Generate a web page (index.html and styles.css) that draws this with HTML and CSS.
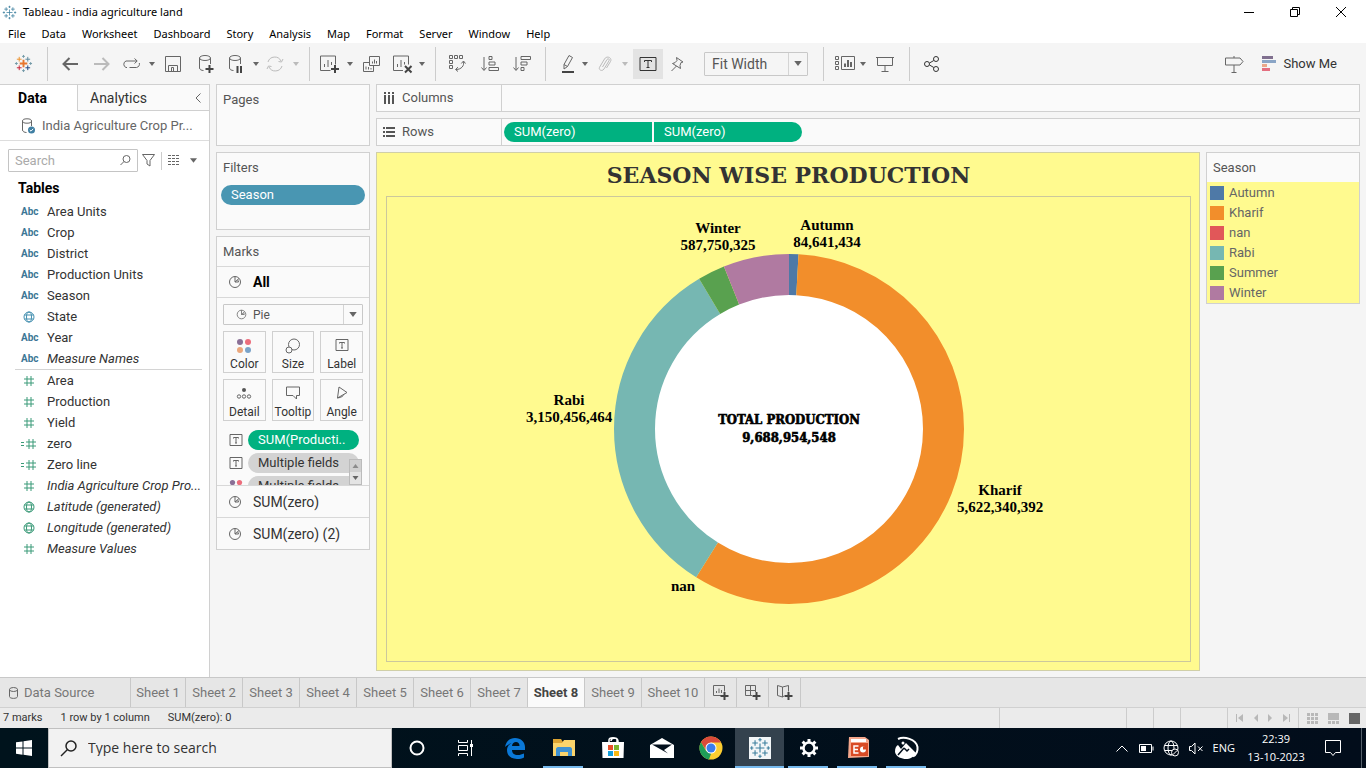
FILE: index.html
```html
<!DOCTYPE html>
<html lang="en">
<head>
<meta charset="utf-8">
<title>Tableau - india agriculture land</title>
<link rel="stylesheet" href="styles.css">
</head>
<body>
<svg class="sprite" aria-hidden="true">
  <symbol id="caret" viewBox="0 0 6 4"><path d="M0 0h6L3 4z" fill="currentColor"/></symbol>
  <symbol id="crosses" viewBox="0 0 20 20">
    <path class="c1" d="M10 6v8M6 10h8"/>
    <path class="c2" d="M5.5 3v5M3 5.5h5"/><path class="c3" d="M14.5 3v5M12 5.5h5"/>
    <path class="c4" d="M5.5 12v5M3 14.5h5"/><path class="c5" d="M14.5 12v5M12 14.5h5"/>
    <path class="c6" d="M10 1v3M8.500 2.500h3M10 16v3M8.500 17.500h3M2.500 8.500v3M1 10h3M17.500 8.500v3M16 10h3"/>
  </symbol>
  <symbol id="pie" viewBox="0 0 14 14"><circle cx="7" cy="7" r="5.500"/><path d="M7 7V1.500M7 7l4-3.500M7 7h3.500a3.500 3.500 0 0 0-1-2.200"/></symbol>
  <symbol id="label" viewBox="0 0 14 14"><path d="M1 1.500h12v11H1zM4.500 5.500V4.500h5v1M7 4.500V10M6 10h2"/></symbol>
  <symbol id="hash" viewBox="0 0 12 12"><path d="M4 1v10M8 1v10M1 4h10M1 8h10"/></symbol>
  <symbol id="calc" viewBox="0 0 16 12"><path d="M8 1v10M12 1v10M5 4h10M5 8h10M0 4.500h3M0 7.500h3"/></symbol>
  <symbol id="globe" viewBox="0 0 12 12"><circle cx="6" cy="6" r="5"/><ellipse cx="6" cy="6" rx="2.500" ry="5"/><path d="M1.500 4h9M1.500 8h9"/></symbol>
  <symbol id="dots" viewBox="0 0 16 16"><g stroke="none"><circle cx="4" cy="4" r="3" fill="#8a6f96"/><circle cx="12" cy="4" r="3" fill="#ec6d7c"/><circle cx="4" cy="12" r="3" fill="#eba77c"/><circle cx="12" cy="12" r="3" fill="#7ba3c8"/></g></symbol>
</svg>

<header class="titlebar">
  <svg class="app-icon mono" width="15" height="15"><use href="#crosses"/></svg>
  <h1 class="app-title">Tableau - india agriculture land</h1>
  <div class="window-buttons">
    <button aria-label="Minimize"><svg width="10" height="10"><path d="M0 5.500h10"/></svg></button>
    <button aria-label="Restore"><svg width="10" height="10"><path d="M.5 2.500h7v7h-7zM2.500 2.500v-2h7v7h-2"/></svg></button>
    <button aria-label="Close"><svg width="10" height="10"><path d="M0 0l10 10M10 0L0 10"/></svg></button>
  </div>
</header>

<nav class="menubar">
  <a href="#">File</a><a href="#">Data</a><a href="#">Worksheet</a><a href="#">Dashboard</a><a href="#">Story</a><a href="#">Analysis</a><a href="#">Map</a><a href="#">Format</a><a href="#">Server</a><a href="#">Window</a><a href="#">Help</a>
</nav>

<div class="toolbar">
  <div class="group g-logo"><button aria-label="Start page"><svg class="color-logo" width="19" height="19"><use href="#crosses"/></svg></button></div>
  <div class="group g-history">
    <button aria-label="Undo"><svg width="16" height="14"><path class="thick" d="M16 7H1.500M7.500 1l-6 6 6 6"/></svg></button>
    <button aria-label="Redo" class="off"><svg width="16" height="14"><path class="thick" d="M0 7h14.500M8.500 1l6 6-6 6"/></svg></button>
    <button aria-label="Replay"><svg width="18" height="12"><path d="M5 9.500H4A3.500 3.500 0 0 1 4 3h11M12.500.500L15.200 3l-2.700 2.500M7.500 9.500h7A3.500 3.500 0 0 0 17.300 5"/></svg></button>
    <button aria-label="Replay options"><svg class="caret" width="6" height="4"><use href="#caret"/></svg></button>
    <button aria-label="Save"><svg width="16" height="16"><path d="M.5.500h15v15H.500zM3.500 15.500v-6h9v6M6.500 15v-3.500h2V15"/></svg></button>
    <button aria-label="New data source"><svg width="16" height="18"><ellipse cx="7" cy="3" rx="5.500" ry="2.500"/><path d="M1.500 3v10c0 1.500 2 2.500 4 2.500M12.500 3v6"/><path class="heavy" d="M11.500 10v8M7.500 14h8"/></svg></button>
    <button aria-label="Pause auto updates"><svg width="16" height="18"><ellipse cx="7" cy="3" rx="5.500" ry="2.500"/><path d="M1.500 3v10c0 1.500 2 2.500 4 2.500M12.500 3v6"/><path class="heavy" d="M9.500 11v7M13 11v7"/></svg></button>
    <button aria-label="Pause options"><svg class="caret" width="6" height="4"><use href="#caret"/></svg></button>
    <button aria-label="Run update" class="off"><svg width="18" height="16"><path d="M2 6A7 7 0 0 1 15 5M16 10A7 7 0 0 1 3 11M12.500 5.500L15.500 6l1.500-3M5.500 10.500L2.500 10 1 13"/></svg></button>
    <button aria-label="Run options" class="off"><svg class="caret" width="6" height="4"><use href="#caret"/></svg></button>
  </div>
  <div class="group g-sheet">
    <button aria-label="New worksheet"><svg width="18" height="18"><path d="M10.500 15.500H.500V1h15v8.500M4.500 12V9M8 12V5M11.500 10V7"/><path class="heavy" d="M15 10v8M11 14h8"/></svg></button>
    <button aria-label="New worksheet options"><svg class="caret" width="6" height="4"><use href="#caret"/></svg></button>
    <button aria-label="Duplicate"><svg width="17" height="16"><path d="M6.500.500h10v9h-10zM6 6.500H.500v9h10V10M9.500 7.500v-2M11.500 7.500v-4M13.500 7.500V5M3 13.500v-3M5.500 13.500V11M8 13.500V12"/></svg></button>
    <button aria-label="Clear sheet"><svg width="18" height="18"><path d="M10 15.500H.500V1h15v8.500M4.500 12V9M8 12V5M11.500 9.500V7"/><path class="heavy" d="M12 11l6.500 6.500M18.500 11L12 17.500"/></svg></button>
    <button aria-label="Clear options"><svg class="caret" width="6" height="4"><use href="#caret"/></svg></button>
  </div>
  <div class="group g-sort">
    <button aria-label="Swap rows and columns"><svg width="17" height="17"><path d="M.5.500h3v3h-3zM5.500.500h3v3h-3zM10.500.500h3v3h-3zM.5 5.500h3v3h-3zM.5 10.500h3v3h-3zM14.500 6.500c1 4-2 8-7.500 8M12.300 8.500l2.200-2.500 2 2.500M9 12.200l-2.500 2.300L9 16.500"/></svg></button>
    <button aria-label="Sort ascending"><svg width="18" height="16"><path d="M3 1v13M.5 11.500L3 14.500l2.500-3M8 .500h3v3H8zM8 6h6v3H8zM8 11.500h9.500v3H8z"/></svg></button>
    <button aria-label="Sort descending"><svg width="18" height="16"><path d="M3 1v13M.5 11.500L3 14.500l2.500-3M8 .500h9.500v3H8zM8 6h6v3H8zM8 11.500h3v3H8z"/></svg></button>
  </div>
  <div class="group g-format">
    <button aria-label="Highlight"><svg width="14" height="18"><path d="M3 9.500l5-9 3.500 2-5 9-3.500 2.500zM3 9.500l3.500 2"/><path class="heavy" d="M1 17h12"/></svg></button>
    <button aria-label="Highlight options"><svg class="caret" width="6" height="4"><use href="#caret"/></svg></button>
    <button aria-label="Group members" class="off"><svg width="14" height="16"><path d="M4.500 11l4.500-7.500c1-1.500 3-.5 2 1.300L6 13c-2 3-6 .7-4.300-2L6.500 3C9-1 14.500 2 12.500 5.500L8.500 12"/></svg></button>
    <button aria-label="Group options" class="off"><svg class="caret" width="6" height="4"><use href="#caret"/></svg></button>
    <button aria-label="Show mark labels" class="pressed"><svg width="18" height="16"><path d="M1 1.500h16v13H1zM5.500 6V4.500h7V6M9 4.500v7M7.500 11.500h3"/></svg></button>
    <button aria-label="Fix axes"><svg width="13" height="14"><path d="M5.500.500l6.500 4.500-2 .5-1 3 .5 3L1.500 6.500l2.500-.8L6 3.500zM5.500 9L.5 14"/></svg></button>
    <div class="select fit"><select aria-label="Fit"><option>Fit Width</option></select><svg class="caret" width="7" height="5"><use href="#caret"/></svg></div>
  </div>
  <div class="group g-cards">
    <button aria-label="Show or hide cards"><svg width="20" height="15"><path d="M.5.500h3v3h-3zM.5 5.500h3v3h-3zM.5 10.500h3v3h-3zM6.500.500h13v13h-13z"/><path class="thick" d="M10 11V7.500M13 11V4M16 11V6"/></svg></button>
    <button aria-label="Card options"><svg class="caret" width="6" height="4"><use href="#caret"/></svg></button>
    <button aria-label="Presentation mode"><svg width="18" height="16"><path d="M0 1.500h18M1.500 1.500v8h15v-8M9 9.500v6M5.500 15.500h7"/></svg></button>
  </div>
  <div class="group g-share"><button aria-label="Share"><svg class="dark" width="16" height="16"><circle cx="3" cy="8" r="2.500"/><circle cx="12" cy="3" r="2.500"/><circle cx="12" cy="13" r="2.500"/><path d="M5.500 7L9.800 4.500M5.500 9l4.300 2.500"/></svg></button></div>
  <div class="toolbar-end">
    <button aria-label="Guide me"><svg width="19" height="18"><path d="M.5 3h14.500l3 3.500-3 3.500H.500zM9 1v2M9 10v7.500M6.500 17.500h5"/></svg></button>
    <button class="show-me"><svg width="14" height="16"><path d="M0 1.500h11" stroke="#80708f"/><path d="M0 5.500h14" stroke="#8aa5c6"/><path d="M0 9.500h5" stroke="#eaa88a"/><path d="M0 13.500h8" stroke="#e46f80"/></svg>Show Me</button>
  </div>
</div>

<main class="workspace">
  <aside class="data-pane">
    <div class="pane-tabs">
      <button class="tab-data">Data</button>
      <button class="tab-analytics">Analytics<svg width="6" height="10"><path d="M5.500 .500L1 5l4.500 4.500"/></svg></button>
    </div>
    <button class="source"><svg width="15" height="16"><ellipse cx="6" cy="3" rx="4.500" ry="2.200"/><path d="M1.500 3v9c0 1.500 2 2.500 4 2.500M10.500 3v5"/><circle cx="10.500" cy="12" r="3.500" fill="#3f7fa3" stroke="none"/><path d="M8.800 12l1.200 1.200 2.200-2.400" stroke="#fff"/></svg>India Agriculture Crop Pr...</button>
    <div class="search-row">
      <div class="search"><input type="text" placeholder="Search" aria-label="Search fields"><svg width="11" height="11"><circle cx="6.500" cy="4" r="3.500"/><path d="M4 6.500L.5 10"/></svg></div>
      <button aria-label="Filter fields"><svg width="13" height="13"><path d="M.5.500h12L8 6.500v5.500L5 10V6.500z"/></svg></button>
      <button class="view" aria-label="View options"><svg width="12" height="11"><path d="M0 .5h12M0 3.500h12M0 6.500h12M0 9.500h12" stroke-dasharray="3 1"/></svg><svg class="caret" width="7" height="5"><use href="#caret"/></svg></button>
    </div>
    <h2>Tables</h2>
    <ul class="fields dims">
      <li><span class="abc">Abc</span>Area Units</li>
      <li><span class="abc">Abc</span>Crop</li>
      <li><span class="abc">Abc</span>District</li>
      <li><span class="abc">Abc</span>Production Units</li>
      <li><span class="abc">Abc</span>Season</li>
      <li><svg width="12" height="12"><use href="#globe"/></svg>State</li>
      <li><span class="abc">Abc</span>Year</li>
      <li class="gen"><span class="abc">Abc</span>Measure Names</li>
    </ul>
    <ul class="fields meas">
      <li><svg width="12" height="12"><use href="#hash"/></svg>Area</li>
      <li><svg width="12" height="12"><use href="#hash"/></svg>Production</li>
      <li><svg width="12" height="12"><use href="#hash"/></svg>Yield</li>
      <li><svg class="wide" width="16" height="12"><use href="#calc"/></svg>zero</li>
      <li><svg class="wide" width="16" height="12"><use href="#calc"/></svg>Zero line</li>
      <li class="gen"><svg width="12" height="12"><use href="#hash"/></svg>India Agriculture Crop Pro...</li>
      <li class="gen"><svg width="12" height="12"><use href="#globe"/></svg>Latitude (generated)</li>
      <li class="gen"><svg width="12" height="12"><use href="#globe"/></svg>Longitude (generated)</li>
      <li class="gen"><svg width="12" height="12"><use href="#hash"/></svg>Measure Values</li>
    </ul>
  </aside>

  <section class="cards">
    <div class="card pages"><h3>Pages</h3></div>
    <div class="card filters"><h3>Filters</h3><button class="pill blue">Season</button></div>
    <div class="card marks">
      <h3>Marks</h3>
      <button class="mark-row all"><svg width="14" height="14"><use href="#pie"/></svg>All</button>
      <div class="mark-body">
        <div class="select type"><svg width="11" height="11"><use href="#pie"/></svg><select aria-label="Mark type"><option>Pie</option></select><svg class="caret" width="7" height="5"><use href="#caret"/></svg></div>
        <div class="mark-grid">
          <button><svg width="16" height="16"><use href="#dots"/></svg>Color</button>
          <button><svg width="16" height="16"><circle cx="9" cy="6.500" r="5.500"/><circle cx="4" cy="12" r="3" fill="#fafafa"/></svg>Size</button>
          <button><svg width="14" height="14"><use href="#label"/></svg>Label</button>
          <button><svg width="16" height="14"><circle cx="8" cy="4" r="2" fill="#555" stroke="none"/><circle cx="3" cy="10.500" r="1.700"/><circle cx="8" cy="10.500" r="1.700"/><circle cx="13" cy="10.500" r="1.700"/></svg>Detail</button>
          <button><svg width="16" height="14"><path d="M1.500 1h13v8.500h-3V13L8 9.500H1.500z"/></svg>Tooltip</button>
          <button><svg width="14" height="14"><path d="M4 1l8 5.500-9.500 5.500zM2.500 12c4-.5 6-2 6.500-4"/></svg>Angle</button>
        </div>
        <div class="mark-fields">
          <div class="mark-field"><svg width="14" height="14"><use href="#label"/></svg><button class="pill green">SUM(Producti..</button></div>
          <div class="mark-field"><svg width="14" height="14"><use href="#label"/></svg><button class="pill grey">Multiple fields</button></div>
          <div class="mark-field"><svg width="14" height="14"><use href="#dots"/></svg><button class="pill grey">Multiple fields</button></div>
          <div class="scroller"><button class="up" aria-label="Scroll up"><svg class="caret" width="7" height="4" viewBox="0 0 6 4"><path d="M0 4h6L3 0z" fill="currentColor"/></svg></button><button aria-label="Scroll down"><svg class="caret" width="7" height="4"><use href="#caret"/></svg></button></div>
        </div>
      </div>
      <button class="mark-row"><svg width="14" height="14"><use href="#pie"/></svg>SUM(zero)</button>
      <button class="mark-row"><svg width="14" height="14"><use href="#pie"/></svg>SUM(zero) (2)</button>
    </div>
  </section>

  <section class="sheet">
    <div class="shelf"><div class="shelf-name"><svg class="shelf-icon" width="12" height="12"><path d="M2 3v9M6 3v9M10 3v9M2 0v2M6 0v2M10 0v2"/></svg>Columns</div></div>
    <div class="shelf"><div class="shelf-name"><svg class="shelf-icon" width="12" height="12"><path d="M3 2h9M3 6h9M3 10h9M0 2h2M0 6h2M0 10h2"/></svg>Rows</div><div class="shelf-pills"><button class="pill green first">SUM(zero)</button><button class="pill green last">SUM(zero)</button></div></div>
    <div class="sheet-row">
      <div class="viz">
        <h2 class="viz-title">SEASON WISE PRODUCTION</h2>
        <div class="viz-pane">
          <svg class="donut" width="350" height="350" viewBox="0 0 350 350" role="img" aria-label="Season wise production">
            <circle cx="175" cy="175" r="136" fill="#fff"/>
            <g class="ring" transform="rotate(-90 175 175)">
              <circle cx="175" cy="175" r="154.500" pathLength="360" stroke="#4e79a7" stroke-dasharray="3.140 360"/>
              <circle cx="175" cy="175" r="154.500" pathLength="360" stroke="#f28e2b" stroke-dasharray="208.900 360" stroke-dashoffset="-3.140"/>
              <circle cx="175" cy="175" r="154.500" pathLength="360" stroke="#76b7b2" stroke-dasharray="117.060 360" stroke-dashoffset="-212.040"/>
              <circle cx="175" cy="175" r="154.500" pathLength="360" stroke="#59a14f" stroke-dasharray="9.060 360" stroke-dashoffset="-329.100"/>
              <circle cx="175" cy="175" r="154.500" pathLength="360" stroke="#b07aa1" stroke-dasharray="21.840 360" stroke-dashoffset="-338.160"/>
            </g>
            <g class="marks-text">
              <text x="213" y="-24">Autumn</text><text x="213" y="-7">84,641,434</text>
              <text x="104" y="-21">Winter</text><text x="104" y="-4">587,750,325</text>
              <text x="-45" y="151">Rabi</text><text x="-45" y="168">3,150,456,464</text>
              <text x="386" y="241">Kharif</text><text x="386" y="258">5,622,340,392</text>
              <text x="69" y="337">nan</text>
            </g>
            <g class="total"><text x="175" y="170">TOTAL PRODUCTION</text><text x="175" y="188">9,688,954,548</text></g>
          </svg>
        </div>
      </div>
      <div class="card legend">
        <h3>Season</h3>
        <ul>
          <li><i class="swatch autumn"></i>Autumn</li>
          <li><i class="swatch kharif"></i>Kharif</li>
          <li><i class="swatch nan"></i>nan</li>
          <li><i class="swatch rabi"></i>Rabi</li>
          <li><i class="swatch summer"></i>Summer</li>
          <li><i class="swatch winter"></i>Winter</li>
        </ul>
      </div>
    </div>
  </section>
</main>

<nav class="sheet-tabs">
  <button class="data-source"><svg width="9" height="12"><ellipse cx="4.500" cy="2.500" rx="4" ry="2"/><path d="M.5 2.500v7c0 2.500 8 2.500 8 0v-7"/></svg>Data Source</button>
  <button class="one">Sheet 1</button><button>Sheet 2</button><button>Sheet 3</button><button>Sheet 4</button><button>Sheet 5</button><button>Sheet 6</button><button>Sheet 7</button><button class="active">Sheet 8</button><button>Sheet 9</button><button class="ten">Sheet 10</button>
  <button class="new" aria-label="New worksheet"><svg width="16" height="15"><path d="M8 10.500H.500v-10h11v6M3.500 8V6M6 8V3.500M8.500 8V5"/><path class="heavy" d="M11.500 7v8M7.500 11h8"/></svg></button>
  <button class="new" aria-label="New dashboard"><svg width="16" height="15"><path d="M7 10.500H.500v-10h10V7M5.500.500v10M.5 5.500h10"/><path class="heavy" d="M11.500 7v8M7.500 11h8"/></svg></button>
  <button class="new" aria-label="New story"><svg width="16" height="15"><path d="M7 11L5.500 12 .5 10.500V.5l5 1.500 6-1.500V6.500M5.500 2v10"/><path class="heavy" d="M11.500 7v8M7.500 11h8"/></svg></button>
</nav>

<footer class="status">
  <span>7 marks</span><span>1 row by 1 column</span><span>SUM(zero): 0</span>
  <div class="cells"><i class="a"></i><i class="b"></i><i class="b"></i><i class="c"></i>
    <div class="pager">
      <button aria-label="First"><svg width="7" height="8"><path d="M0 0h1v8H0zM7 0v8L2 4z"/></svg></button>
      <button aria-label="Previous"><svg width="4" height="8"><path d="M4 0v8L0 4z"/></svg></button>
      <button aria-label="Next"><svg width="4" height="8"><path d="M0 0v8l4-4z"/></svg></button>
      <button aria-label="Last"><svg width="7" height="8"><path d="M6 0h1v8H6zM0 0v8l5-4z"/></svg></button>
    </div>
    <div class="views">
      <button aria-label="Sheet sorter"><svg width="11" height="11"><path d="M0 0h3v3H0zM4 0h3v3H4zM8 0h3v3H8zM0 4h3v3H0zM4 4h3v3H4zM8 4h3v3H8zM0 8h3v3H0zM4 8h3v3H4zM8 8h3v3H8z"/></svg></button>
      <button aria-label="Filmstrip"><svg width="11" height="11"><path d="M0 0h11v7H0zM0 8h3v3H0zM4 8h3v3H4zM8 8h3v3H8z"/></svg></button>
      <button aria-label="Tabs" class="on"><svg width="11" height="11"><path d="M0 0h11v11H0z"/></svg></button>
    </div>
  </div>
</footer>

<div class="taskbar">
  <button class="start" aria-label="Start"><svg width="16" height="16"><path fill="#fff" d="M0 2.300L6.500 1.400v6.200H0zM7.500 1.300L16 0v7.600H7.500zM0 8.500h6.500v6.200L0 13.800zM7.500 8.500H16V16l-8.500-1.200z"/></svg></button>
  <div class="win-search"><svg width="17" height="17"><circle cx="11" cy="6" r="5"/><path d="M7.500 9.500L1 16"/></svg><input type="text" placeholder="Type here to search" aria-label="Search Windows"></div>
  <div class="apps">
    <button aria-label="Cortana"><svg width="16" height="16"><circle cx="8" cy="8" r="6.500" fill="none" stroke="#fff" stroke-width="2"/></svg></button>
    <button aria-label="Task view"><svg width="16" height="16"><path fill="none" stroke="#fff" d="M.5 0v2.500h9V0M.5 5.500h9v5h-9zM.5 16v-2.500h9V16M13.500 0v16"/><path fill="#fff" d="M12 4h3v3h-3z"/></svg></button>
    <button aria-label="Edge"><svg width="22" height="22" viewBox="0 0 22 22"><path fill="#0a78d7" d="M1 10C2 4 6 1 11 1c6 0 10 4 10 9v3H8c0 3 2 5 6 5 2 0 4-.6 6-1.500v4c-2 1-4 1.500-7 1.500-6 0-10-3.500-10-9 0-3 1.500-5.500 4.500-7C5 7 3 8 1 10zM8 9h7.500C15.500 6.500 14 5 12 5S8.300 6.500 8 9z"/></svg></button>
    <button class="open" aria-label="File Explorer"><svg width="22" height="20"><path fill="#dca332" d="M0 1h8l2 3v14H0z"/><path fill="#fbd46b" d="M0 5h9l2-3h11v16H0z"/><path fill="#3f92d2" d="M3 18v-7c0-1 1-2 2-2h12c1 0 2 1 2 2v7h-4v-4H7v4z"/></svg></button>
    <button aria-label="Store"><svg width="24" height="24"><path fill="none" stroke="#fff" stroke-width="1.500" d="M8 7V4c0-3 8-3 8 0v3M10 5c0-3 6-5 7 0v2"/><path fill="#fff" d="M1 6h22l-.500 16h-21z"/><path fill="#e8502a" d="M7 9h5v5H7z"/><path fill="#7db72f" d="M13 9h5v5h-5z"/><path fill="#159fda" d="M7 15h5v5H7z"/><path fill="#fbb914" d="M13 15h5v5h-5z"/></svg></button>
    <button aria-label="Mail"><svg width="24" height="20"><path fill="#fff" d="M0 7L12 0l12 7v13H0z"/><path fill="#020f1c" d="M2 6.500h20l-8 5.500 4 3.500z"/></svg></button>
    <button aria-label="Chrome"><svg width="24" height="24" viewBox="0 0 24 24"><circle cx="12" cy="12" r="11.500" fill="#fccd31"/><path fill="#da4a3a" d="M2 6.200A11.500 11.500 0 0 1 22 6.500H12L7 14z"/><path fill="#1f9d58" d="M2 6.200l5 8.500 5 3-2 5.700A11.500 11.500 0 0 1 2 6.200z"/><circle cx="12" cy="12" r="5.500" fill="#fff"/><circle cx="12" cy="12" r="4.500" fill="#3b7ded"/></svg></button>
    <button class="open current" aria-label="Tableau"><svg class="tile mono" width="22" height="22"><use href="#crosses"/></svg></button>
    <button class="open" aria-label="Settings"><svg width="20" height="20" viewBox="-10 -10 20 20"><circle r="5.500" fill="none" stroke="#fff" stroke-width="2.500"/><path stroke="#fff" stroke-width="3" d="M0-9v3M0 6v3M-9 0h3M6 0h3M-6.400-6.400l2.200 2.200M4.200 4.200l2.200 2.200M6.400-6.400L4.200-4.200M-4.200 4.200l-2.200 2.200"/></svg></button>
    <button class="open" aria-label="PowerPoint"><svg width="24" height="22"><path fill="#f4a78c" d="M3 0h16l4 3v17L2 21z"/><path fill="#fff" d="M5 2h15v3H5z"/><path fill="#d84b25" d="M5 6h17v13H5z"/><path fill="none" stroke="#fff" stroke-width="1.500" d="M12.500 9H8v7h4.500M8 12.500h4"/><circle cx="17" cy="12.500" r="3" fill="#fff"/><path fill="#d84b25" d="M17 12.500V9.500h3v3z"/></svg></button>
    <button class="open" aria-label="Photos"><svg width="24" height="22"><path fill="none" stroke="#fff" stroke-width="2" d="M3 2C9-1 21 2 22.500 10c.5 5-2 8-4.500 9.500"/><path fill="#fff" d="M0 15c0-4 1-6 3-7l3 4 5-6 10 10c-2 4-6 6-10 6S1 20 0 15z"/><path fill="none" stroke="#020f1c" stroke-width="1.500" d="M3 18l6-7M9 11l3 3 2-2"/><circle cx="8" cy="6" r="1.500" fill="#fff"/></svg></button>
  </div>
  <div class="tray">
    <button aria-label="Hidden icons" class="chev"><svg width="12" height="7"><path d="M.5 6.500L6 1l5.500 5.500"/></svg></button>
    <button aria-label="Battery"><svg width="15" height="9"><path d="M.5.500h12v8H.500zM14 2.500v4"/><path d="M2 2h5v5H2z" fill="#fff" stroke="none"/></svg></button>
    <button aria-label="Network"><svg width="17" height="17"><circle cx="8" cy="8" r="7"/><ellipse cx="8" cy="8" rx="3" ry="7"/><path d="M1.500 5.500h13M1.500 10.500h13"/><circle cx="12" cy="12.500" r="3.500" fill="#020b18"/><path d="M9.800 14.800l4.500-4.500"/></svg></button>
    <button aria-label="Volume"><svg width="15" height="13"><path d="M.5 4.500h2l3.500-3.500v11L2.500 8.500h-2zM9 4.500l4.500 4.500M13.500 4.500L9 9"/></svg></button>
    <button class="lang">ENG</button>
    <button class="clock">22:39<br>13-10-2023</button>
    <button aria-label="Notifications" class="note"><svg width="17" height="16"><path d="M.5.500h15v12h-5L8 15.500l-2.500-3h-5z"/></svg></button>
    <i class="peek"></i>
  </div>
</div>
</body>
</html>
```
FILE: styles.css
```css
* { box-sizing: border-box; }

body {
  margin: 0;
  min-height: 100vh;
  display: flex;
  flex-direction: column;
  background: #f5f5f5;
  color: #333;
  font: 13px/16px Roboto, "Open Sans", sans-serif;
}

h1, h2, h3, ul { margin: 0; padding: 0; font: inherit; list-style: none; }
a { color: inherit; text-decoration: none; }
button, input, select {
  margin: 0;
  padding: 0;
  border: 0;
  background: none;
  color: inherit;
  font: inherit;
  outline: 0;
}
button { display: flex; align-items: center; justify-content: center; }
svg { flex: none; overflow: visible; fill: none; stroke: #666; }
.sprite { position: absolute; width: 0; height: 0; }
.caret { stroke: none; color: #666; }
.thick { stroke-width: 2; }
.heavy { stroke-width: 2; stroke: #444; }
.shelf-icon { stroke-width: 2; stroke: #555; }
.dark { stroke: #333; }

/* Logo */
.color-logo { --a: #e8762d; --b: #eb912c; --c: #5b879b; --d: #c72035; --e: #1f447e; --f: #7199a6; --w: 2; }
.mono { --a: #3b7f9d; --b: #3b7f9d; --c: #3b7f9d; --d: #3b7f9d; --e: #3b7f9d; --f: #3b7f9d; --w: 1; }
.c1 { stroke: var(--a); stroke-width: var(--w); }
.c2 { stroke: var(--b); }
.c3 { stroke: var(--c); }
.c4 { stroke: var(--d); }
.c5 { stroke: var(--e); }
.c6 { stroke: var(--f); }

/* Title bar and menus */
.titlebar, .menubar { background: #fff; color: #000; font: 11px/16px "Noto Sans", "Open Sans", sans-serif; }
.titlebar { display: flex; align-items: center; height: 24px; padding-left: 2px; }
.app-title { margin-left: 6px; }
.window-buttons { display: flex; margin-left: auto; padding-right: 2px; }
.window-buttons button { width: 46px; height: 20px; }
.window-buttons svg { stroke: #000; }
.menubar { display: flex; gap: 16px; height: 19px; padding: 2px 8px; }

/* Toolbar */
.toolbar { display: flex; align-items: center; height: 41px; }
.group { display: grid; align-items: center; justify-items: center; height: 34px; border-right: 1px solid #ccc; }
.g-logo { grid-template-columns: 47px; }
.g-history { grid-template-columns: 32px 32px 26px 16px 26px 40px 20px 20px 18px 24px; padding: 0 1px 0 6px; }
.g-sheet { grid-template-columns: 30px 12px 30px 32px 8px; padding: 0 9px 0 4px; }
.g-sort { grid-template-columns: 32px 34px 30px; padding: 0 8px 0 5px; }
.g-format { grid-template-columns: 22px 12px 28px 12px 34px 24px 119px; padding: 0 15px 0 11px; }
.g-cards { grid-template-columns: 22px 14px 30px; padding: 0 9px 0 10px; }
.g-share { grid-template-columns: 30px; padding-left: 7px; border: 0; }
.off { opacity: .4; }
.pressed { width: 30px; height: 30px; background: #e3e3e3; }
.pressed svg { stroke: #333; }
.select { display: flex; align-items: center; border: 1px solid #c8c8c8; border-radius: 1px; }
.select select { flex: 1; min-width: 0; height: 100%; appearance: none; color: #555; }
.select .caret { width: 18px; height: 5px; }
.fit { justify-self: end; width: 104px; height: 24px; }
.fit select { padding-left: 7px; border-right: 1px solid #d4d4d4; font-size: 14px; }
.toolbar-end { display: flex; align-items: center; gap: 18px; margin-left: auto; padding-right: 29px; }
.show-me { gap: 7px; }
.show-me svg { stroke-width: 3; }

/* Workspace */
.workspace { display: flex; flex: 1; min-height: 593px; }
.data-pane { width: 210px; flex: none; background: #fff; border-top: 1px solid #d0d0d0; border-right: 1px solid #d0d0d0; }
.pane-tabs { display: flex; height: 26px; font-size: 14px; }
.tab-data { width: 77px; padding-right: 12px; color: #000; font-weight: 700; }
.tab-analytics { flex: 1; justify-content: space-between; padding: 0 8px 0 12px; background: #fafafa; border-left: 1px solid #d0d0d0; border-bottom: 1px solid #d0d0d0; }
.source { width: 100%; height: 30px; justify-content: flex-start; gap: 6px; padding-left: 21px; border-bottom: 1px solid #ddd; color: #666; }
.search-row { display: flex; align-items: center; padding: 8px 8px 0; }
.search { display: flex; align-items: center; width: 130px; height: 23px; padding: 0 6px; border: 1px solid #c4c4c4; border-radius: 1px; }
.search input { flex: 1; min-width: 0; }
.search input::placeholder { color: #aaa; opacity: 1; }
.search-row > button { height: 18px; padding: 0 5px 0 4px; }
.search-row > .view { gap: 10px; margin-left: 1px; padding: 0 6px; border-left: 1px solid #ccc; }
.data-pane h2 { height: 29px; padding: 8px 18px 0; color: #000; font-size: 14px; font-weight: 700; }
.fields li { display: flex; align-items: center; height: 21px; padding-left: 47px; white-space: nowrap; }
.fields li > :first-child { width: 16px; margin: 0 10px 0 -26px; }
.fields .abc { font: 700 10px/14px Roboto, sans-serif; }
.dims .abc { color: #3c7795; }
.dims svg { stroke: #4590b0; }
.meas svg { stroke: #3a9a78; }
.dims::after { content: ""; display: block; margin: 0 7px 0 15px; border-top: 1px solid #d4d4d4; }
.gen { font-style: italic; }
.gen .abc { font-style: normal; }

.cards { display: flex; flex-direction: column; gap: 6px; width: 154px; margin: 0 6px; flex: none; }
.card { background: #fafafa; border: 1px solid #d0d0d0; }
.card h3 { padding: 7px 6px; color: #555; }
.pages { height: 62px; }
.filters { height: 78px; }
.filters h3 { padding-bottom: 9px; }
.pill { height: 20px; border-radius: 10px; padding: 0 10px; justify-content: flex-start; color: #fff; white-space: nowrap; }
.blue { width: 144px; margin-left: 4px; background: #4996b2; }
.green { background: #00b180; }
.grey { background: #d3d3d3; color: #333; }
.mark-row { width: 100%; height: 32px; justify-content: flex-start; gap: 11px; padding-left: 11px; border-top: 1px solid #d8d8d8; font-size: 14px; }
.all { border-bottom: 1px solid #d8d8d8; color: #000; font-weight: 700; }
.marks h3 { height: 29px; }
.mark-body { padding: 6px 6px 0; }
.type { height: 21px; padding-left: 12px; }
.type select { padding-left: 6px; border-right: 1px solid #d4d4d4; font-size: 12px; }
.mark-grid { display: grid; grid-template-columns: repeat(3, 1fr); gap: 6px; margin-top: 6px; }
.mark-grid button { flex-direction: column; justify-content: space-between; height: 42px; padding: 6px 0 0; border: 1px solid #d0d0d0; font-size: 12px; line-height: 16px; }
.mark-fields { position: relative; display: flex; flex-direction: column; gap: 3px; height: 55px; margin-top: 9px; overflow: hidden; }
.mark-field { display: flex; align-items: center; gap: 5px; padding: 0 4px 0 6px; flex: none; }
.mark-field .pill { flex: 1; }
.scroller { position: absolute; right: 1px; bottom: 0; width: 13px; background: #e4e4e4; border: 1px solid #bbb; }
.scroller button { width: 11px; height: 12px; }
.scroller .up { background: #c8c8c8; opacity: .7; }

/* Shelves */
.sheet { display: flex; flex: 1; flex-direction: column; gap: 6px; min-width: 0; padding: 0 6px 6px 0; }
.shelf { display: flex; height: 28px; background: #fafafa; border: 1px solid #d0d0d0; }
.shelf-name { display: flex; align-items: center; gap: 7px; width: 125px; padding-left: 6px; border-right: 1px solid #d0d0d0; color: #555; }
.shelf-pills { display: flex; align-items: center; gap: 2px; padding-left: 2px; }
.shelf-pills .pill { width: 148px; }
.first { border-radius: 10px 0 0 10px; }
.last { border-radius: 0 10px 10px 0; }
.sheet-row { display: flex; flex: 1; align-items: flex-start; gap: 6px; }

/* Chart */
.viz { display: flex; flex: 1; flex-direction: column; align-self: stretch; padding: 0 8px 8px 9px; background: #fffa8f; border: 1px solid #d0cfa8; }
.viz-title { padding: 12px 0 11px; color: #333; text-align: center; font: 700 22px/20px "DejaVu Serif", serif; }
.viz-pane { display: flex; flex: 1; align-items: center; justify-content: center; border: 1px solid #ccc89c; }
.ring { stroke-width: 41; }
.donut { stroke: none; }
.donut text { fill: #000; text-anchor: middle; }
.marks-text { font: 700 15px/17px "Liberation Serif", "Times New Roman", serif; }
.total { font: 900 13px/17px "DejaVu Serif Condensed", "DejaVu Serif", serif; stroke: #000; stroke-width: .6; }

.legend { width: 154px; flex: none; }
.legend h3 { padding-bottom: 6px; }
.legend ul { padding-top: 1px; background: #fffa8f; }
.legend li { display: flex; align-items: center; gap: 5px; height: 20px; padding-left: 3px; color: #666; }
.swatch { width: 14px; height: 14px; }
.autumn { background: #4e79a7; }
.kharif { background: #f28e2b; }
.nan { background: #e15759; }
.rabi { background: #76b7b2; }
.summer { background: #59a14f; }
.winter { background: #b07aa1; }

/* Sheet tabs and status */
.sheet-tabs { display: flex; height: 31px; background: #e6e6e6; border-top: 1px solid #c8c8c8; border-bottom: 1px solid #d0d0d0; color: #777; }
.sheet-tabs button { width: 57px; border-right: 1px solid #c8c8c8; }
.sheet-tabs .data-source { width: 131px; justify-content: flex-start; gap: 6px; padding-left: 9px; }
.sheet-tabs .one { width: 55px; }
.sheet-tabs .active { background: #fafafa; color: #444; font-weight: 700; }
.sheet-tabs .ten { width: 63px; }
.sheet-tabs .new { width: 32px; }
.status { display: flex; align-items: center; gap: 18px; height: 20px; padding-left: 3px; background: #ebebeb; font-size: 11px; }
.cells { display: flex; align-self: stretch; margin-left: auto; border-left: 1px solid #ccc; }
.cells i, .pager { border-right: 1px solid #ccc; }
.a { width: 127px; }
.b { width: 27px; }
.c { width: 47px; }
.pager, .views { display: flex; align-items: center; justify-content: space-between; }
.pager { width: 71px; padding: 0 8px; }
.views { width: 67px; padding: 0 6px 0 8px; }
.cells svg { fill: #b8b8b8; stroke: none; }
.cells .on svg { fill: #666; }

/* Taskbar */
.taskbar { display: flex; height: 40px; background: linear-gradient(90deg, #00131c, #020d1b); color: #fff; font-family: "Open Sans", sans-serif; }
.start { width: 48px; }
.start svg, .apps svg { stroke: none; }
.win-search { display: flex; align-items: center; gap: 11px; width: 344px; padding-left: 11px; background: #f2f2f2; border: 1px solid #c0c0c0; }
.win-search svg { stroke: #222; stroke-width: 1.5; }
.win-search input { flex: 1; min-width: 0; font-size: 14px; }
.win-search input::placeholder { color: #333; opacity: 1; }
.apps { display: flex; }
.apps button { position: relative; width: 49px; }
.open::after { content: ""; position: absolute; left: 4px; right: 5px; bottom: 0; height: 2px; background: #76b9ed; }
.current { background: #34424e; }
.current::after { left: 0; right: 0; }
.tile { background: #f2f6f8; }
.tray { display: flex; align-items: center; gap: 9px; margin-left: auto; font-size: 11px; }
.tray svg { stroke: #fff; }
.chev { margin-right: 2px; }
.clock { line-height: 18px; display: block; text-align: center; width: 64px; }
.note { margin-left: 8px; }
.peek { width: 1px; height: 40px; margin: 0 4px 0 10px; background: #55606a; }
```
